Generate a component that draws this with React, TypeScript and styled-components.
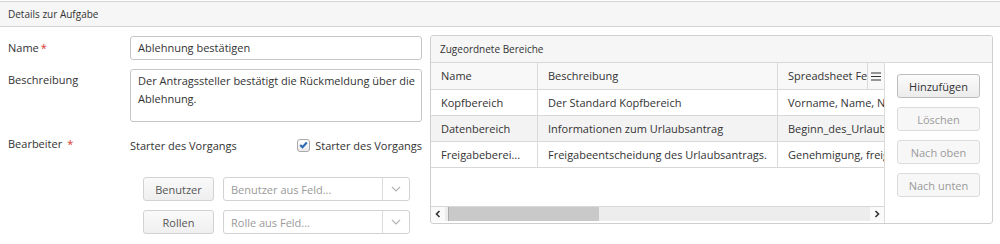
import React from 'react';
import styled, { createGlobalStyle } from 'styled-components';

const Global = createGlobalStyle`
  body {
    margin: 0;
    background: #fff;
    font-family: "Open Sans", "Liberation Sans", sans-serif;
    font-size: 11px;
    color: #333;
  }
`;

const Page = styled.div`
  width: 1000px;
  height: 244px;
  overflow: hidden;
  padding-top: 1px;
  box-sizing: border-box;
`;

const TopBar = styled.div`
  height: 24px;
  line-height: 24px;
  padding-left: 8px;
  font-size: 10px;
  background: #f6f6f6;
  border-top: 1px solid #d4d4d4;
  border-bottom: 1px solid #d4d4d4;
`;

const Body = styled.div`
  display: flex;
  gap: 8px;
  padding-left: 8px;
`;

const Form = styled.div`
  width: 414px;
  padding-top: 9px;
  display: flex;
  flex-direction: column;
`;

const FieldRow = styled.div<{ $mt?: number; $lh?: number }>`
  display: grid;
  grid-template-columns: 122px 292px;
  align-items: start;
  margin-top: ${p => p.$mt ?? 0}px;
  line-height: ${p => p.$lh ?? 24}px;
`;

const Label = styled.div`
  white-space: nowrap;
`;

const Req = styled.span<{ $gap?: boolean }>`
  color: #d9352b;
  margin-left: ${p => (p.$gap ? 5 : 2)}px;
`;

const TextInput = styled.div`
  height: 24px;
  box-sizing: border-box;
  border: 1px solid #c6c6c6;
  border-radius: 3px;
  padding: 0 7px;
  line-height: 22px;
`;

const TextArea = styled.div`
  height: 53px;
  box-sizing: border-box;
  border: 1px solid #c6c6c6;
  border-radius: 3px;
  padding: 2px 7px;
  line-height: 18px;
  white-space: pre;
  overflow: hidden;
`;

const AssignRow = styled.div`
  display: flex;
  justify-content: space-between;
  align-items: center;
  height: 22px;
`;

const CheckLabel = styled.label`
  display: flex;
  align-items: center;
  gap: 5px;
`;

const CheckBox = styled.span`
  width: 13px;
  height: 13px;
  box-sizing: border-box;
  border: 1px solid #a9a9a9;
  border-radius: 3px;
  background: linear-gradient(#fff, #e9e9e9);
  display: flex;
  align-items: center;
  justify-content: center;
`;

const PickRows = styled.div`
  margin-top: 21px;
  padding-left: 135px;
  display: flex;
  flex-direction: column;
  gap: 9px;
`;

const PickRow = styled.div`
  display: flex;
  gap: 9px;
`;

const Button = styled.button<{ $w?: number; $disabled?: boolean }>`
  width: ${p => p.$w ?? 71}px;
  height: 24px;
  padding: 0;
  font-family: inherit;
  font-size: 11px;
  border-radius: 3px;
  border: 1px solid ${p => (p.$disabled ? '#dcdcdc' : '#bdbdbd')};
  color: ${p => (p.$disabled ? '#9a9a9a' : '#333')};
  background: ${p => (p.$disabled ? '#f7f7f7' : 'linear-gradient(#fbfbfb, #ececec)')};
`;

const PickButton = styled(Button)`
  color: #555;
  border-color: #d2d2d2;
  background: linear-gradient(#fafafa, #efefef);
`;

const Select = styled.div`
  width: 187px;
  height: 24px;
  box-sizing: border-box;
  border: 1px solid #d2d2d2;
  border-radius: 3px;
  display: flex;
  align-items: center;
`;

const SelectText = styled.div`
  flex: 1;
  padding-left: 7px;
  color: #9a9a9a;
`;

const SelectArrow = styled.div`
  width: 26px;
  height: 22px;
  border-left: 1px solid #dcdcdc;
  display: flex;
  align-items: center;
  justify-content: center;
`;

const Panel = styled.div`
  margin-top: 8px;
  width: 563px;
  height: 189px;
  box-sizing: border-box;
  border: 1px solid #cfcfcf;
  border-radius: 3px;
  display: flex;
  flex-direction: column;
  overflow: hidden;
`;

const PanelHead = styled.div`
  height: 26px;
  line-height: 26px;
  padding-left: 9px;
  font-size: 10px;
  background: #f6f6f6;
  border-bottom: 1px solid #d8d8d8;
`;

const PanelBody = styled.div`
  flex: 1;
  display: flex;
`;

const Grid = styled.div`
  width: 453px;
  position: relative;
  display: flex;
  flex-direction: column;
  border-right: 1px solid #dcdcdc;
  overflow: hidden;
`;

const Rows = styled.div`
  flex: 1;
`;

const Row = styled.div<{ $head?: boolean; $alt?: boolean }>`
  display: grid;
  grid-template-columns: 107px 240px 170px;
  height: ${p => (p.$head ? 26 : 25)}px;
  background: ${p => (p.$head ? '#f8f8f8' : p.$alt ? '#f3f3f3' : '#fff')};
  border-bottom: 1px solid #d8d8d8;
`;

const Cell = styled.div`
  padding-left: 10px;
  line-height: 25px;
  white-space: nowrap;
  overflow: hidden;
  border-right: 1px solid #dadada;
`;

const ColMenu = styled.div`
  position: absolute;
  top: 0;
  right: 0;
  width: 16px;
  height: 26px;
  background: #f8f8f8;
  border-left: 1px solid #dadada;
  display: flex;
  align-items: center;
  justify-content: center;
`;

const ScrollBar = styled.div`
  height: 14px;
  display: flex;
  background: #ededed;
  border-top: 1px solid #d8d8d8;
  margin-bottom: 2px;
`;

const ScrollArrow = styled.div`
  width: 14px;
  background: #fafafa;
  display: flex;
  align-items: center;
  justify-content: center;
`;

const Thumb = styled.div`
  margin-left: 3px;
  background: #c9c9c9;
  border-left: 1px solid #aaa;
`;

const Actions = styled.div`
  flex: 1;
  display: flex;
  flex-direction: column;
  padding: 11px 0 0 12px;
  gap: 9px;
`;

const Chevron = () => (
  <svg width="10" height="6" viewBox="0 0 10 6">
    <polyline points="1,1 5,5 9,1" fill="none" stroke="#b5b5b5" strokeWidth="1.2" />
  </svg>
);

const Arrow = ({ dir }: { dir: 'l' | 'r' }) => (
  <svg width="6" height="8" viewBox="0 0 6 8">
    <polyline
      points={dir === 'l' ? '4.5,1 1.5,4 4.5,7' : '1.5,1 4.5,4 1.5,7'}
      fill="none"
      stroke="#333"
      strokeWidth="1.6"
    />
  </svg>
);

const rows = [
  ['Kopfbereich', 'Der Standard Kopfbereich', 'Vorname, Name, Nachname'],
  ['Datenbereich', 'Informationen zum Urlaubsantrag', 'Beginn_des_Urlaubs'],
  ['Freigabeberei...', 'Freigabeentscheidung des Urlaubsantrags.', 'Genehmigung, freigegeben'],
];

export default function App() {
  return (
    <Page>
      <Global />
      <TopBar>Details zur Aufgabe</TopBar>
      <Body>
        <Form>
          <FieldRow>
            <Label>
              Name<Req>*</Req>
            </Label>
            <TextInput>Ablehnung bestätigen</TextInput>
          </FieldRow>
          <FieldRow $mt={9} $lh={22}>
            <Label>Beschreibung</Label>
            <TextArea>{'Der Antragssteller bestätigt die Rückmeldung über die\nAblehnung.'}</TextArea>
          </FieldRow>
          <FieldRow $mt={12} $lh={19}>
            <Label>
              Bearbeiter<Req $gap>*</Req>
            </Label>
            <AssignRow>
              <span>Starter des Vorgangs</span>
              <CheckLabel>
                <CheckBox>
                  <svg width="9" height="8" viewBox="0 0 9 8">
                    <polyline points="1.2,4 3.5,6.2 7.8,1.5" fill="none" stroke="#2b66b1" strokeWidth="2" />
                  </svg>
                </CheckBox>
                Starter des Vorgangs
              </CheckLabel>
            </AssignRow>
          </FieldRow>
          <PickRows>
            <PickRow>
              <PickButton>Benutzer</PickButton>
              <Select>
                <SelectText>Benutzer aus Feld...</SelectText>
                <SelectArrow>
                  <Chevron />
                </SelectArrow>
              </Select>
            </PickRow>
            <PickRow>
              <PickButton>Rollen</PickButton>
              <Select>
                <SelectText>Rolle aus Feld...</SelectText>
                <SelectArrow>
                  <Chevron />
                </SelectArrow>
              </Select>
            </PickRow>
          </PickRows>
        </Form>
        <Panel>
          <PanelHead>Zugeordnete Bereiche</PanelHead>
          <PanelBody>
            <Grid>
              <Rows>
                <Row $head>
                  <Cell>Name</Cell>
                  <Cell>Beschreibung</Cell>
                  <Cell>Spreadsheet Felder</Cell>
                </Row>
                {rows.map((r, i) => (
                  <Row key={r[0]} $alt={i === 1}>
                    {r.map(c => (
                      <Cell key={c}>{c}</Cell>
                    ))}
                  </Row>
                ))}
              </Rows>
              <ColMenu>
                <svg width="10" height="9" viewBox="0 0 10 9">
                  <path d="M0 1h10M0 4.5h10M0 8h10" stroke="#333" strokeWidth="1.2" />
                </svg>
              </ColMenu>
              <ScrollBar>
                <ScrollArrow>
                  <Arrow dir="l" />
                </ScrollArrow>
                <Thumb style={{ width: 150 }} />
                <div style={{ flex: 1 }} />
                <ScrollArrow>
                  <Arrow dir="r" />
                </ScrollArrow>
              </ScrollBar>
            </Grid>
            <Actions>
              <Button $w={83}>Hinzufügen</Button>
              <Button $w={83} $disabled>Löschen</Button>
              <Button $w={83} $disabled>Nach oben</Button>
              <Button $w={83} $disabled>Nach unten</Button>
            </Actions>
          </PanelBody>
        </Panel>
      </Body>
    </Page>
  );
}
